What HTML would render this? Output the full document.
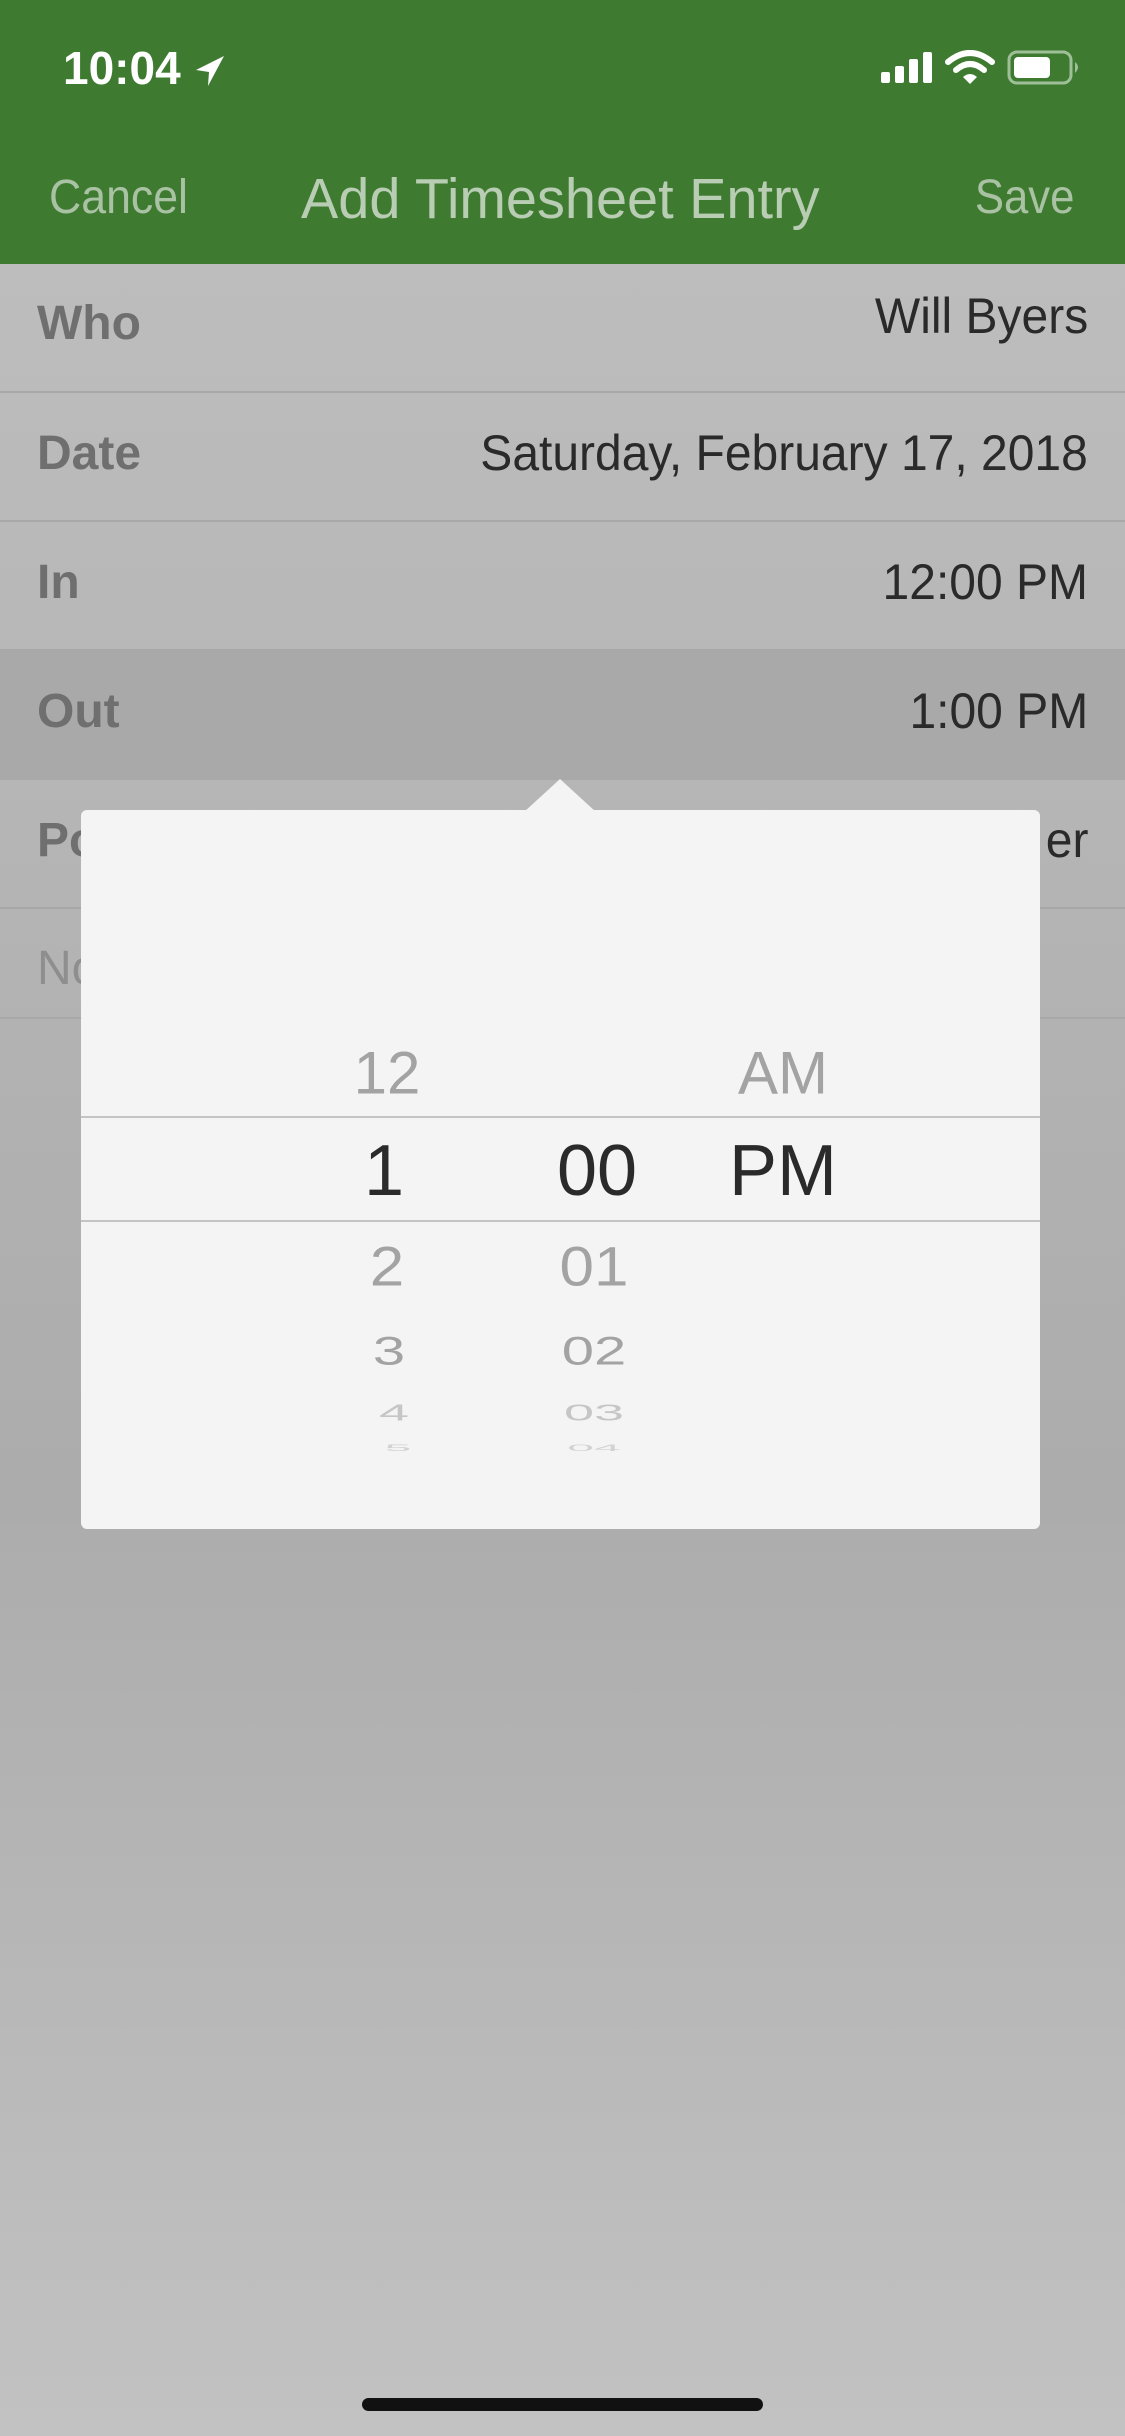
<!DOCTYPE html>
<html><head><meta charset="utf-8"><style>
*{margin:0;padding:0;box-sizing:border-box}
html,body{width:1125px;height:2436px;overflow:hidden}
body{position:relative;font-family:"Liberation Sans",sans-serif;background:linear-gradient(#bdbdbd 264px,#b4b4b4 900px,#acacac 1500px,#b8b8b8 2000px,#c2c2c2 2436px)}
.top{position:absolute;left:0;top:0;width:1125px;height:264px;background:#3e7b31}
.t{position:absolute;white-space:nowrap}
.row{position:absolute;left:0;width:1125px;border-bottom:2px solid #a8a8a8}
.lab{position:absolute;left:37px;font-size:48px;font-weight:bold;color:#6f6f6f;transform:scaleX(1);transform-origin:left}
.val{position:absolute;right:37px;font-size:50px;color:#2a2a2a;transform:scaleX(.96);transform-origin:right}
.pop{position:absolute;left:81px;top:810px;width:959px;height:719px;background:#f4f4f4;border-radius:6px}
.pk{position:absolute;transform:translate(-50%,-50%);white-space:nowrap;color:#a3a3a3}
</style></head><body>
<div class="top"></div>
<div class="t" style="left:63px;top:41px;font-size:46px;font-weight:bold;color:#fff">10:04</div>
<svg style="position:absolute;left:194px;top:54px" width="32" height="34" viewBox="0 0 32 34"><path d="M30 2 L2 16 L15 18 L14 32 Z" fill="#fff"/></svg>
<svg style="position:absolute;left:878px;top:50px" width="210" height="40" viewBox="0 0 210 40">
<rect x="3" y="22" width="9" height="11" rx="2" fill="#fff"/><rect x="17" y="16" width="9" height="17" rx="2" fill="#fff"/><rect x="31" y="9" width="9" height="24" rx="2" fill="#fff"/><rect x="45" y="2" width="9" height="31" rx="2" fill="#fff"/>
<path d="M70 12 Q92 -6 114 12" stroke="#fff" stroke-width="6" fill="none" stroke-linecap="round"/>
<path d="M78 20 Q92 8 106 20" stroke="#fff" stroke-width="6" fill="none" stroke-linecap="round"/>
<path d="M85 27 L92 34 L99 27 Q92 21 85 27Z" fill="#fff"/>
<rect x="131" y="2" width="62" height="31" rx="8" fill="none" stroke="#9fbf98" stroke-width="3"/>
<rect x="136" y="7" width="36" height="21" rx="4" fill="#fff"/>
<path d="M197 12 Q203 17 197 23Z" fill="#9fbf98"/>
</svg>
<div class="t" style="left:49px;top:170px;font-size:48px;color:#a9c2a3;transform:scaleX(.93);transform-origin:left">Cancel</div>
<div class="t" style="left:301px;top:166px;font-size:57px;color:#b8cdb3;transform:scaleX(.98);transform-origin:left">Add Timesheet Entry</div>
<div class="t" style="right:51px;top:170px;font-size:48px;color:#a9c2a3;transform:scaleX(.91);transform-origin:right">Save</div>

<div class="row" style="top:264px;height:129px"><div class="lab" style="top:32px">Who</div><div class="val" style="top:23px">Will Byers</div></div>
<div class="row" style="top:393px;height:129px"><div class="lab" style="top:33px">Date</div><div class="val" style="top:31px">Saturday, February 17, 2018</div></div>
<div class="row" style="top:522px;height:129px"><div class="lab" style="top:33px">In</div><div class="val" style="top:31px">12:00 PM</div></div>
<div class="row" style="top:651px;height:129px;background:#a9a9a9;border:none"><div class="lab" style="top:33px">Out</div><div class="val" style="top:31px">1:00 PM</div></div>
<div class="row" style="top:780px;height:129px"><div class="lab" style="top:33px">Po</div><div class="val" style="top:31px">er</div></div>
<div class="row" style="top:909px;height:110px"><div class="lab" style="top:32px;font-weight:normal;color:#8e8e8e">No</div></div>

<svg style="position:absolute;left:524px;top:779px" width="72" height="33"><path d="M0 33 L36 0 L72 33Z" fill="#f4f4f4"/></svg>
<div class="pop">
<div style="position:absolute;left:0;top:306px;width:959px;height:2px;background:#c4c4c4"></div>
<div style="position:absolute;left:0;top:410px;width:959px;height:2px;background:#c4c4c4"></div>
</div>
<div class="pk" style="left:387px;top:1073px;font-size:60px">12</div>
<div class="pk" style="left:783px;top:1073px;font-size:60px">AM</div>
<div class="pk" style="left:384px;top:1171px;font-size:72px;color:#2a2a2a">1</div>
<div class="pk" style="left:597px;top:1171px;font-size:72px;color:#2a2a2a">00</div>
<div class="pk" style="left:783px;top:1171px;font-size:72px;color:#2a2a2a">PM</div>
<div class="pk" style="left:387px;top:1267px;font-size:62px;transform:translate(-50%,-50%) scaleY(.9)">2</div>
<div class="pk" style="left:594px;top:1267px;font-size:62px;transform:translate(-50%,-50%) scaleY(.9)">01</div>
<div class="pk" style="left:389px;top:1351px;font-size:58px;transform:translate(-50%,-50%) scaleY(.68)">3</div>
<div class="pk" style="left:594px;top:1351px;font-size:58px;transform:translate(-50%,-50%) scaleY(.68)">02</div>
<div class="pk" style="left:394px;top:1413px;font-size:54px;color:#c6c6c6;transform:translate(-50%,-50%) scaleY(.42)">4</div>
<div class="pk" style="left:594px;top:1413px;font-size:54px;color:#c6c6c6;transform:translate(-50%,-50%) scaleY(.42)">03</div>
<div class="pk" style="left:398px;top:1448px;font-size:48px;color:#d2d2d2;transform:translate(-50%,-50%) scaleY(.2)">5</div>
<div class="pk" style="left:594px;top:1448px;font-size:48px;color:#d2d2d2;transform:translate(-50%,-50%) scaleY(.2)">04</div>

<div style="position:absolute;left:362px;top:2398px;width:401px;height:13px;border-radius:7px;background:#111"></div>
</body></html>
